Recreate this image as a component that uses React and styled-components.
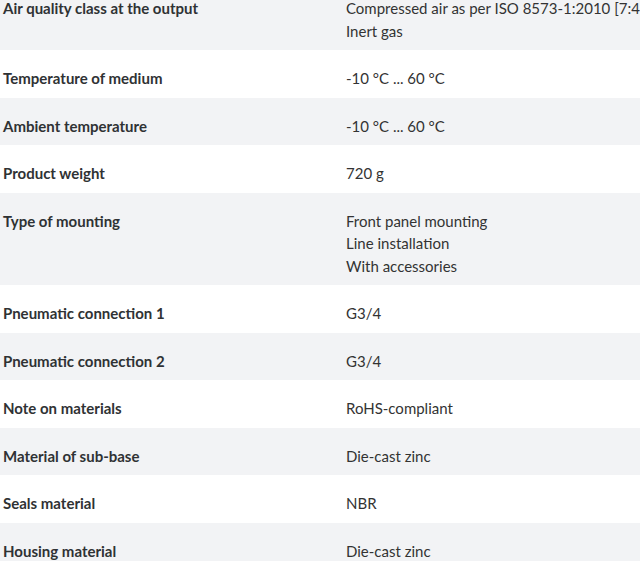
import React from 'react'
import styled, { createGlobalStyle } from 'styled-components'

const GlobalStyle = createGlobalStyle`
  html, body {
    margin: 0;
    padding: 0;
    background: #fff;
    overflow: hidden;
  }
  body {
    font-family: Lato, "Open Sans", sans-serif;
    color: #333;
  }
`

const Table = styled.div`
  width: 640px;
  margin-top: -20px;
  overflow: hidden;
`
const Row = styled.div`
  display: grid;
  grid-template-columns: 343px 1fr;
  background: ${p => (p.$shaded ? '#f2f3f5' : '#fff')};
  padding: 17px 0 8px;
`
const Label = styled.div`
  padding-left: 3px;
  font-size: 15px;
  line-height: 22.5px;
  font-weight: 700;
  color: #2f3234;
`
const Value = styled.div`
  padding-left: 3px;
  font-size: 15px;
  line-height: 22.5px;
  color: #333;
  white-space: nowrap;
`
const Line = styled.div``

const specs = [
  ['Air quality class at the output', ['Compressed air as per ISO 8573-1:2010 [7:4:4]', 'Inert gas']],
  ['Temperature of medium', ['-10 °C ... 60 °C']],
  ['Ambient temperature', ['-10 °C ... 60 °C']],
  ['Product weight', ['720 g']],
  ['Type of mounting', ['Front panel mounting', 'Line installation', 'With accessories']],
  ['Pneumatic connection 1', ['G3/4']],
  ['Pneumatic connection 2', ['G3/4']],
  ['Note on materials', ['RoHS-compliant']],
  ['Material of sub-base', ['Die-cast zinc']],
  ['Seals material', ['NBR']],
  ['Housing material', ['Die-cast zinc']],
]

function App() {
  return (
    <>
      <GlobalStyle />
      <Table>
        {specs.map(([label, values], i) => (
          <Row key={label} $shaded={i % 2 === 0}>
            <Label>{label}</Label>
            <Value>
              {values.map(v => (
                <Line key={v}>{v}</Line>
              ))}
            </Value>
          </Row>
        ))}
      </Table>
    </>
  )
}

export default App
